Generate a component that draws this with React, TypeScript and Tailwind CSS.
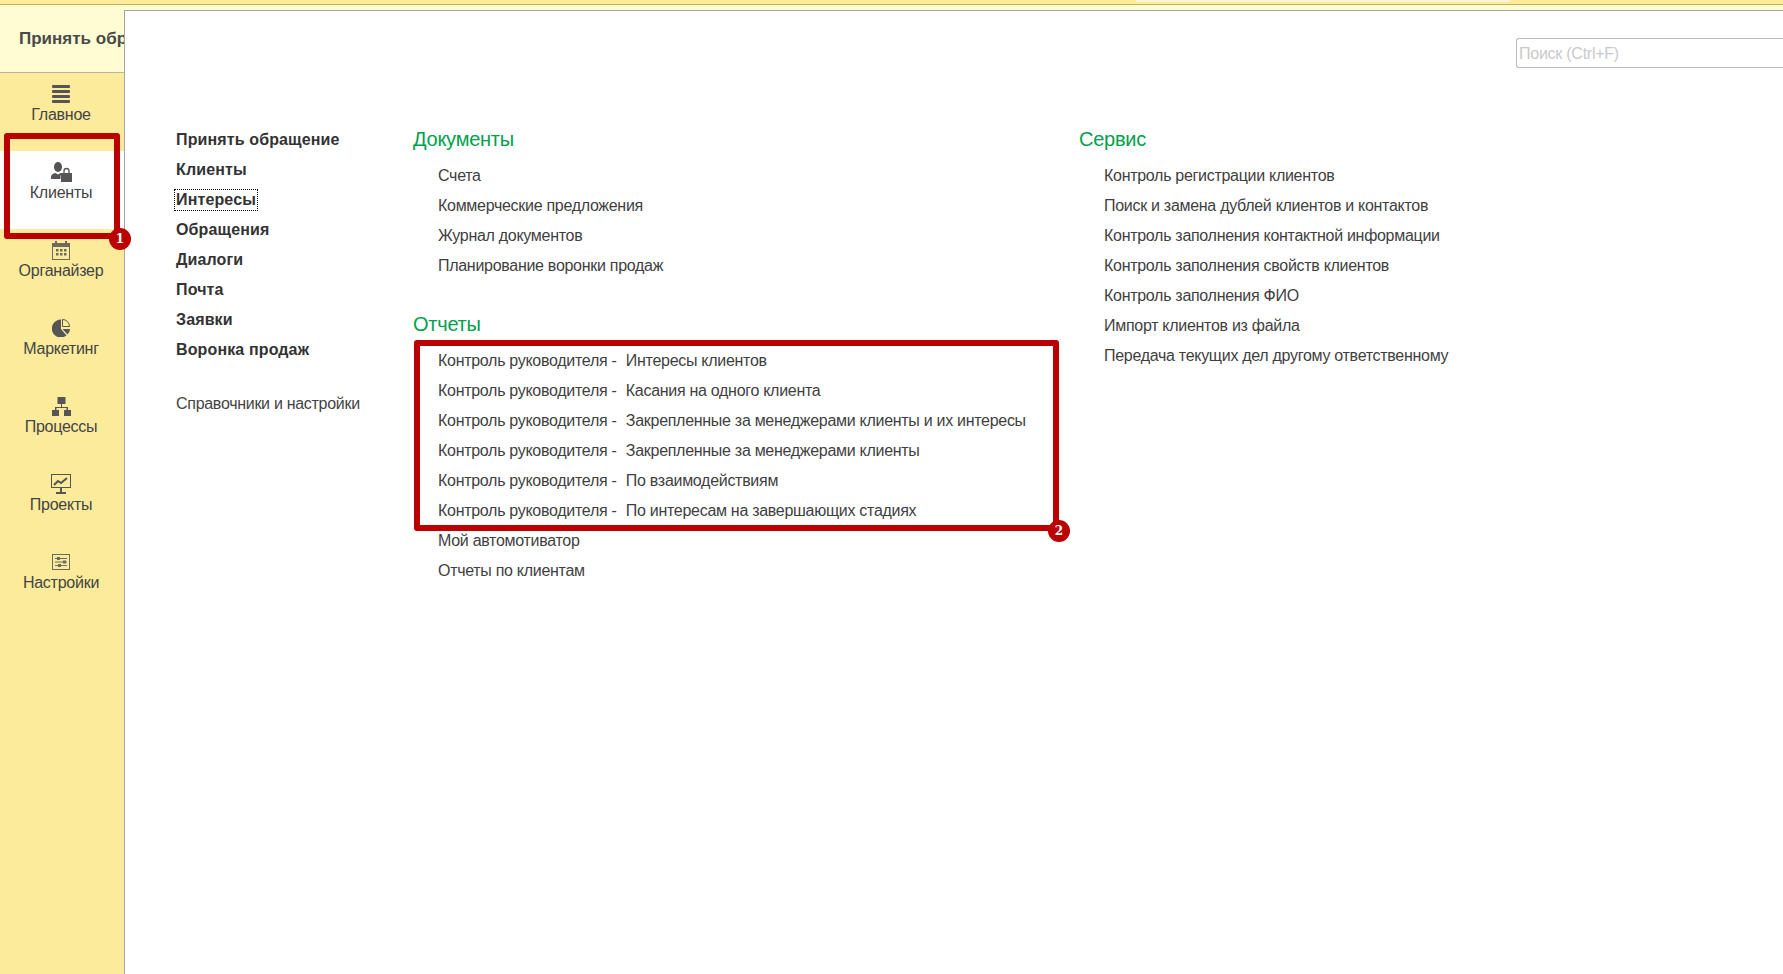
import type { ReactNode } from "react";

const sans = "font-['Liberation_Sans',Arial,sans-serif]";

function Lines() {
  return (
    <svg width="18" height="18" viewBox="0 0 18 18" fill="#555">
      <rect x="0" y="0" width="18" height="3" rx="1" />
      <rect x="0" y="5" width="18" height="3" rx="1" />
      <rect x="0" y="10" width="18" height="3" rx="1" />
      <rect x="0" y="15" width="18" height="3" rx="1" />
    </svg>
  );
}

function UserBag() {
  return (
    <svg width="21" height="20" viewBox="0 0 21 20" fill="#555">
      <ellipse cx="7" cy="5" rx="4" ry="5" />
      <path d="M0 15c0-2.500 2.500-3.500 4.500-4L7 12.500 9.500 11c1 .3 1.500.6 2 1l-2 1.500V17H0z" />
      <path d="M10 11h11v9H10z" />
      <path d="M13 11V9a2.500 2.500 0 0 1 5 0v2" fill="none" stroke="#555" strokeWidth="1.300" />
    </svg>
  );
}

function Calendar() {
  return (
    <svg width="18" height="19" viewBox="0 0 18 19" fill="#6b6b5f">
      <rect x="0.500" y="2.500" width="17" height="16" fill="none" stroke="#6b6b5f" />
      <rect x="0" y="2" width="18" height="4" />
      <rect x="3" y="0" width="2" height="4" />
      <rect x="13" y="0" width="2" height="4" />
      <rect x="4" y="8" width="2.500" height="2.500" />
      <rect x="8" y="8" width="2.500" height="2.500" />
      <rect x="12" y="8" width="2.500" height="2.500" />
      <rect x="4" y="12" width="2.500" height="2.500" />
      <rect x="8" y="12" width="2.500" height="2.500" />
      <rect x="12" y="12" width="2.500" height="2.500" />
    </svg>
  );
}

function Pie() {
  return (
    <svg width="18" height="18" viewBox="0 0 18 18" fill="#555">
      <path d="M9 0.500A9 9 0 1 0 14.500 16.500L9 10z" />
      <path d="M10.500.500a7 7 0 0 1 7 7h-7z" fill="none" stroke="#555" />
      <path d="M10.500 10H18a8 8 0 0 1-2.500 5.500z" />
    </svg>
  );
}

function Tree() {
  return (
    <svg width="19" height="19" viewBox="0 0 19 19" fill="#555">
      <rect x="5.500" y="0" width="8" height="7" />
      <rect x="0" y="13" width="7" height="6" />
      <rect x="12" y="13" width="7" height="6" />
      <path d="M9 7h1v3h6v3h-1.500v-2h-10v2H3v-3h6z" />
    </svg>
  );
}

function Chart() {
  return (
    <svg width="20" height="20" viewBox="0 0 20 20" fill="none" stroke="#555">
      <rect x="0.500" y="0.500" width="19" height="13" strokeWidth="1" />
      <path d="M3 11l4-4 3 2 6-5" strokeWidth="2" />
      <path d="M10 14v4M5 19h10" strokeWidth="2" />
    </svg>
  );
}

function Sliders() {
  return (
    <svg width="18" height="16" viewBox="0 0 18 16" fill="none" stroke="#6b6b5f">
      <rect x="0.500" y="0.500" width="17" height="15" />
      <path d="M3 4.500h12M3 8h12M3 11.500h12" />
      <rect x="5" y="3" width="3" height="3" fill="#6b6b5f" stroke="none" />
      <rect x="11" y="6.500" width="3" height="3" fill="#6b6b5f" stroke="none" />
      <rect x="6" y="10" width="3" height="3" fill="#6b6b5f" stroke="none" />
    </svg>
  );
}

const navItems: { label: string; icon: ReactNode; active?: boolean }[] = [
  { label: "Главное", icon: <Lines /> },
  { label: "Клиенты", icon: <UserBag />, active: true },
  { label: "Органайзер", icon: <Calendar /> },
  { label: "Маркетинг", icon: <Pie /> },
  { label: "Процессы", icon: <Tree /> },
  { label: "Проекты", icon: <Chart /> },
  { label: "Настройки", icon: <Sliders /> },
];

const mainLinks = ["Принять обращение", "Клиенты", "Интересы", "Обращения", "Диалоги", "Почта", "Заявки", "Воронка продаж"];
const docs = ["Счета", "Коммерческие предложения", "Журнал документов", "Планирование воронки продаж"];
const managerReports = [
  "Интересы клиентов",
  "Касания на одного клиента",
  "Закрепленные за менеджерами клиенты и их интересы",
  "Закрепленные за менеджерами клиенты",
  "По взаимодействиям",
  "По интересам на завершающих стадиях",
];
const service = [
  "Контроль регистрации клиентов",
  "Поиск и замена дублей клиентов и контактов",
  "Контроль заполнения контактной информации",
  "Контроль заполнения свойств клиентов",
  "Контроль заполнения ФИО",
  "Импорт клиентов из файла",
  "Передача текущих дел другому ответственному",
];

function Row({ children }: { children: ReactNode }) {
  return <div className="h-[30px] pl-[25px] text-[16px] leading-[30px] tracking-[-0.29px] text-[#3f3f3f] whitespace-nowrap">{children}</div>;
}

function Heading({ children }: { children: ReactNode }) {
  return <div className="mb-[8px] h-[28px] text-[20px] leading-[28px] tracking-[-0.25px] text-[#00a14b]">{children}</div>;
}

function Badge({ n, className }: { n: number; className: string }) {
  return (
    <span className={`absolute flex h-[22px] w-[22px] items-center justify-center rounded-full bg-[#bb0000] font-['DejaVu_Serif',serif] text-[12px] font-bold text-white ${className}`}>
      {n}
    </span>
  );
}

export default function App() {
  return (
    <div className={`${sans} flex h-[974px] w-[1783px] flex-col overflow-hidden bg-[#fefcd3]`}>
      <div className="h-[5px] border-b border-[#c9ae55] bg-[#fbeb9b]">
        <div className="ml-[1136px] h-[2px] w-[374px] bg-[#f9f4d6]" />
      </div>
      <div className="flex min-h-0 flex-1">
        <aside className="relative w-[124px] shrink-0 bg-[#fbeb9b]">
          <div className="flex h-[68px] items-center overflow-hidden whitespace-nowrap border-b border-[#b5b5a5] bg-[#fefcd3] pl-[19px] text-[17px] font-bold text-[#4a4a4a]">
            Принять обращение
          </div>
          {navItems.map((item) => (
            <div
              key={item.label}
              className={`flex h-[78px] w-full flex-col items-center pr-[2px] pt-[11px] text-[16px] leading-[18px] tracking-[-0.25px] text-[#444] ${item.active ? "bg-white" : ""}`}
            >
              <div className="flex h-[20px] items-center">{item.icon}</div>
              <div className="mt-[2px]">{item.label}</div>
            </div>
          ))}
          <div className="pointer-events-none absolute left-[4px] top-[128px] h-[106px] w-[116px] rounded-[3px] border-[6px] border-[#bb0000]" />
          <Badge n={1} className="left-[109px] top-[223px]" />
        </aside>

        <main className="mt-[5px] flex min-w-0 flex-1 flex-col border-l border-t border-[#a6a6a6] bg-white">
          <div className="flex h-[114px] justify-end pt-[27px]">
            <div className="h-[30px] w-[267px] rounded-l-[3px] border border-r-0 border-[#bcbcbc] pl-[2px] text-[16px] leading-[30px] tracking-[-0.25px] text-[#c9c9c9]">
              Поиск (Ctrl+F)
            </div>
          </div>
          <div className="flex pl-[51px]">
            <nav className="w-[237px] shrink-0">
              {mainLinks.map((link) => (
                <div key={link} className="flex h-[30px] items-center text-[16px] font-bold tracking-[0.13px] text-[#333]">
                  {link === "Интересы" ? (
                    <span className="-ml-[2px] h-[22px] border border-dotted border-black px-[1px] leading-[20px]">{link}</span>
                  ) : (
                    link
                  )}
                </div>
              ))}
              <div className="mt-[24px] h-[30px] text-[16px] leading-[30px] tracking-[-0.29px] text-[#444]">Справочники и настройки</div>
            </nav>

            <section className="w-[666px] shrink-0">
              <Heading>Документы</Heading>
              {docs.map((d) => (
                <Row key={d}>{d}</Row>
              ))}
              <div className="mt-[29px]">
                <Heading>Отчеты</Heading>
              </div>
              <div className="relative">
                {managerReports.map((r) => (
                  <Row key={r}>
                    Контроль руководителя -&nbsp;&nbsp;<span className="ml-[1px]">{r}</span>
                  </Row>
                ))}
                <div className="pointer-events-none absolute -top-[6px] left-[1px] h-[191px] w-[645px] rounded-[3px] border-[6px] border-[#bb0000]" />
                <Badge n={2} className="left-[635px] top-[174px]" />
                <Row>Мой автомотиватор</Row>
                <Row>Отчеты по клиентам</Row>
              </div>
            </section>

            <section>
              <Heading>Сервис</Heading>
              {service.map((s) => (
                <Row key={s}>{s}</Row>
              ))}
            </section>
          </div>
        </main>
      </div>
    </div>
  );
}
